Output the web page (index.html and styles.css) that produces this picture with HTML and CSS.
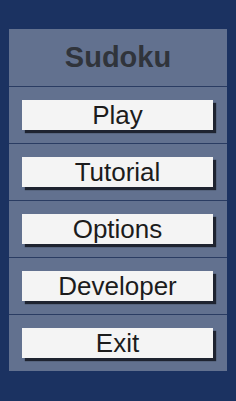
FILE: index.html
```html
<!DOCTYPE html>
<html lang="en">
<head>
  <meta charset="UTF-8" />
  <title>Sudoku</title>
  <link rel="stylesheet" href="styles.css">
</head>
<body>
  <div class="menu">
    <div class="menu-title">Sudoku</div>
    <div class="menu-row"><button class="menu-button">Play</button></div>
    <div class="menu-row"><button class="menu-button">Tutorial</button></div>
    <div class="menu-row"><button class="menu-button">Options</button></div>
    <div class="menu-row"><button class="menu-button">Developer</button></div>
    <div class="menu-row"><button class="menu-button">Exit</button></div>
  </div>
</body>
</html>
```

FILE: styles.css
```css
body {
  margin: 0;
  padding: 29px 9px 0 9px;
  background-color: #1b3261;
  font-family: "Liberation Sans", Arial, sans-serif;
}
.menu {
  background-color: #62718f;
}
.menu-title {
  height: 57px;
  display: flex;
  align-items: center;
  justify-content: center;
  font-size: 29px;
  font-weight: bold;
  color: #30343b;
}
.menu-row {
  border-top: 1px solid #2a3c62;
  padding: 13px 14px 13px 13px;
}
.menu-button {
  display: block;
  width: 100%;
  height: 30px;
  margin: 0;
  padding: 0;
  border: none;
  background-color: #f4f4f4;
  color: #1c1c1c;
  font-family: "Liberation Sans", Arial, sans-serif;
  font-size: 26px;
  line-height: 30px;
  box-shadow: 3px 3px 1px #1e2330;
  cursor: pointer;
}
```
